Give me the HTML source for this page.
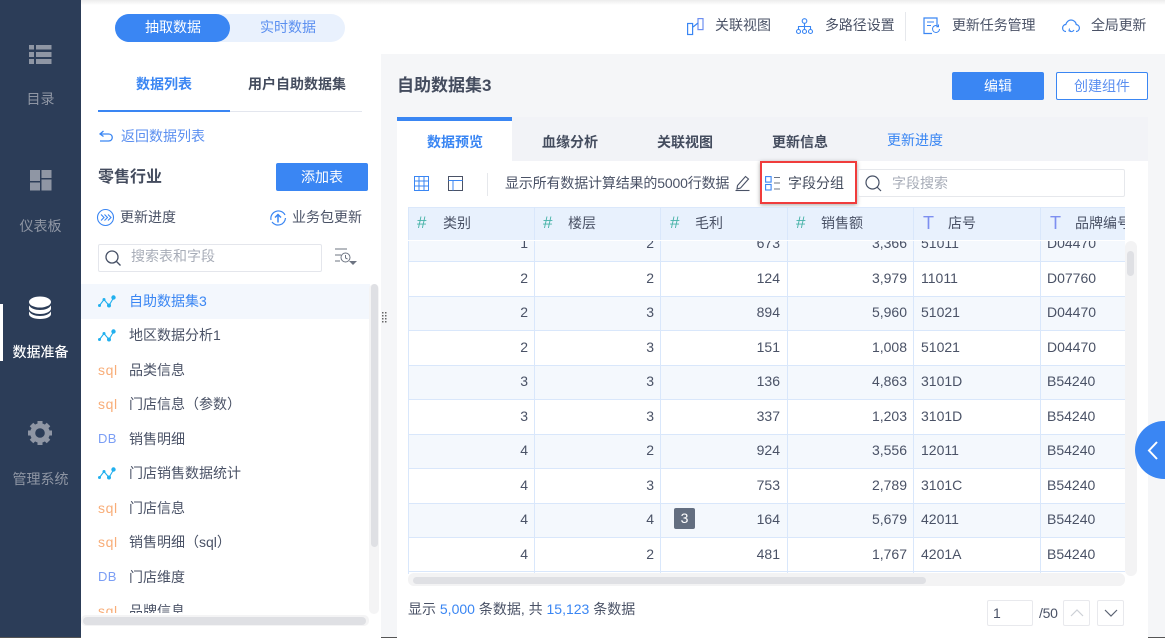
<!DOCTYPE html>
<html lang="zh"><head><meta charset="utf-8"><title>数据准备</title>
<style>
*{box-sizing:border-box}
html,body{margin:0;padding:0;width:1165px;height:638px;overflow:hidden;background:#fff}
body{position:relative;font-family:"Liberation Sans","Noto Sans CJK SC",sans-serif;font-size:14px;color:#4a5266}
.a,.t{position:absolute}
.t{white-space:nowrap;line-height:20px;height:20px;margin-top:1px}
.b{color:#3a86f3}
svg{position:absolute;overflow:visible}
.side{color:#8f96a4;width:81px;left:0;text-align:center}
.rowbg{position:absolute;left:408px;width:717px}
.v{position:absolute;width:1px;background:#d9e7fb}
.h{position:absolute;left:408px;width:717px;height:1px;background:#d9e7fb}
.n{position:absolute;text-align:right;line-height:20px;height:20px;color:#4a5266;width:120px!important;margin-top:0}
.l{position:absolute;line-height:20px;height:20px;color:#4a5266}
.hd{position:absolute;top:213px;line-height:20px;color:#4a5266}
.hash{position:absolute;top:213px;line-height:20px;color:#47b3a8;font-size:17px}
.tt{position:absolute;top:213px;line-height:20px;color:#7d8ff0;font-size:18px}
.it{left:129px;color:#4a5266}
.sq{left:98px;color:#f8ad78;font-size:14px;letter-spacing:.6px}
.db{left:98px;color:#7b9ef5;font-size:13px;letter-spacing:.3px}
</style></head><body>
<div class="a" style="left:81px;top:0;width:1084px;height:5px;background:linear-gradient(#ececec,#fff)"></div>
<div class="a" style="left:0;top:0;width:81px;height:638px;background:#2c3d58"></div>
<div class="a" style="left:0;top:304px;width:3px;height:57px;background:#fff"></div>
<div class="a" style="left:81px;top:54px;width:1084px;height:584px;background:#fff"></div>
<div class="a" style="left:381px;top:54px;width:784px;height:584px;background:#f5f6f8"></div>
<div class="a" style="left:0;top:637px;width:1165px;height:1px;background:#555"></div>

<!-- sidebar -->
<svg style="left:29px;top:45px" width="24" height="20"><g fill="#8f96a4"><rect width="5" height="4.500" x="0" y="0"/><rect width="15.500" height="4.500" x="7" y="0"/><rect width="5" height="5" x="0" y="7"/><rect width="15.500" height="5" x="7" y="7"/><rect width="5" height="5" x="0" y="14"/><rect width="15.500" height="5" x="7" y="14"/></g></svg>
<div class="t side" style="top:88px">目录</div>
<svg style="left:30px;top:170px" width="22" height="22"><g fill="#8f96a4"><rect width="10" height="20.500" x="0" y="0"/><rect width="10" height="8" x="11.500" y="0"/><rect width="10" height="11" x="11.500" y="9.500"/></g><rect x="0" y="11" width="10" height="1.500" fill="#2c3d58"/></svg>
<div class="t side" style="top:215px">仪表板</div>
<svg style="left:29px;top:296px" width="24" height="24"><ellipse cx="11" cy="6" rx="11" ry="5.500" fill="#fff"/><path d="M0 9.500c2 3 6 4.500 11 4.500s9-1.500 11-4.500v3c0 3-5 5.500-11 5.500S0 15.500 0 12.500z" fill="#fff"/><path d="M0 15.500c2 3 6 4.500 11 4.500s9-1.500 11-4.500v2.500c0 3-5 5-11 5S0 21 0 18z" fill="#fff"/></svg>
<div class="t side" style="top:341px;color:#fff;text-shadow:0 0 .4px #fff">数据准备</div>
<svg style="left:28px;top:421px" width="24" height="24" viewBox="0 0 24 24"><circle cx="12" cy="12" r="7.300" fill="none" stroke="#8f96a4" stroke-width="5"/><g stroke="#8f96a4" stroke-width="5"><path d="M12 0v4M12 20v4M0 12h4M20 12h4"/><path d="M3.500 3.500l2.800 2.800M17.700 17.700l2.800 2.800M3.500 20.500l2.800-2.800M17.700 6.300l2.800-2.800"/></g></svg>
<div class="t side" style="top:468px">管理系统</div>

<!-- top switch -->
<div class="a" style="left:115px;top:14px;width:230px;height:28px;border-radius:14px;background:#e9f1fd"></div>
<div class="a" style="left:115px;top:14px;width:115px;height:28px;border-radius:14px;background:#3a86f3"></div>
<div class="t" style="left:145px;top:16px;color:#fff">抽取数据</div>
<div class="t b" style="left:260px;top:16px;color:#5b8ff0">实时数据</div>

<!-- left tabs -->
<div class="t" style="left:136px;top:73px;color:#3a86f3;font-weight:700">数据列表</div>
<div class="t" style="left:248px;top:73px;color:#444c5e;font-weight:700">用户自助数据集</div>
<div class="a" style="left:98px;top:111px;width:264px;height:1px;background:#e3e6ee"></div>
<div class="a" style="left:98px;top:110px;width:132px;height:2px;background:#3a86f3"></div>
<svg style="left:99px;top:130px" width="16" height="14" fill="none" stroke="#3a86f3" stroke-width="1.300"><path d="M4.500 1L1 4l3.500 2.500M1 4h8.500c5 0 5 7 0 7H1"/></svg>
<div class="t b" style="left:121px;top:125px;color:#5b8ff0">返回数据列表</div>
<div class="t" style="left:98px;top:168px;font-size:16px;font-weight:700;color:#444c5e;margin-top:0">零售行业</div>
<div class="a" style="left:276px;top:163px;width:92px;height:28px;background:#3a86f3;border-radius:2px"></div>
<div class="t" style="left:276px;top:166px;width:92px;text-align:center;color:#fff">添加表</div>
<svg style="left:97px;top:209px" width="17" height="17" fill="none" stroke="#3a86f3" stroke-width="1.100"><circle cx="8.500" cy="8.500" r="8"/><path d="M4 5.500l3 3-3 3M7.500 5.500l3 3-3 3M11 5.500l3 3-3 3"/></svg>
<div class="t" style="left:120px;top:206px">更新进度</div>
<svg style="left:269px;top:209px" width="18" height="18" fill="none" stroke="#3a86f3" stroke-width="1.200"><path d="M2 11A7.500 7.500 0 0 1 16 6M16.500 9A7.500 7.500 0 0 1 3 13"/><path d="M9 13.500V6M6 8.500l3-3 3 3" stroke-width="1.500"/></svg>
<div class="t" style="left:292px;top:206px">业务包更新</div>
<div class="a" style="left:98px;top:244px;width:224px;height:28px;border:1px solid #e4e6ec;border-radius:2px;background:#fff"></div>
<svg style="left:105px;top:250px" width="16" height="16" fill="none" stroke="#465065" stroke-width="1.300"><circle cx="7" cy="7" r="6"/><path d="M11.500 11.500l4 4"/></svg>
<div class="t" style="left:131px;top:245px;color:#a8adb8">搜索表和字段</div>
<svg style="left:334px;top:248px" width="24" height="20" fill="none" stroke="#6d7482" stroke-width="1"><path d="M1 1h12M1 7h6M1 13h5"/><circle cx="11.500" cy="9.500" r="4.500"/><path d="M11.500 7v3l2 1"/><path d="M15 13h8l-4 4z" fill="#6d7482" stroke="none"/></svg>

<!-- list -->
<div class="a" style="left:81px;top:284px;width:289px;height:35px;background:#f3f7fd"></div>
<div class="t" style="left:129px;top:290px;color:#3a86f3">自助数据集3</div>
<svg style="left:98px;top:295px" width="18" height="14" fill="none" stroke="#22b0ee" stroke-width="1.100"><path d="M1.500 10.500L6 4.500l5 6 5-8.500"/><g fill="#22b0ee" stroke="none"><circle cx="1.500" cy="10.500" r="1.500"/><circle cx="6" cy="4.500" r="1.500"/><circle cx="11" cy="10.500" r="2"/><circle cx="15.500" cy="2.500" r="2.200"/></g></svg>
<svg style="left:98px;top:329px" width="18" height="14" fill="none" stroke="#22b0ee" stroke-width="1.100"><path d="M1.500 10.500L6 4.500l5 6 5-8.500"/><g fill="#22b0ee" stroke="none"><circle cx="1.500" cy="10.500" r="1.500"/><circle cx="6" cy="4.500" r="1.500"/><circle cx="11" cy="10.500" r="2"/><circle cx="15.500" cy="2.500" r="2.200"/></g></svg>
<svg style="left:98px;top:467px" width="18" height="14" fill="none" stroke="#22b0ee" stroke-width="1.100"><path d="M1.500 10.500L6 4.500l5 6 5-8.500"/><g fill="#22b0ee" stroke="none"><circle cx="1.500" cy="10.500" r="1.500"/><circle cx="6" cy="4.500" r="1.500"/><circle cx="11" cy="10.500" r="2"/><circle cx="15.500" cy="2.500" r="2.200"/></g></svg>
<div class="t sq" style="top:359px">sql</div>
<div class="t sq" style="top:393px">sql</div>
<div class="t sq" style="top:497px">sql</div>
<div class="t sq" style="top:531px">sql</div>
<div class="t sq" style="top:600px">sql</div>
<div class="t db" style="top:428px">DB</div>
<div class="t db" style="top:566px">DB</div>
<div class="t it" style="top:324px">地区数据分析1</div>
<div class="t it" style="top:359px">品类信息</div>
<div class="t it" style="top:393px">门店信息（参数）</div>
<div class="t it" style="top:428px">销售明细</div>
<div class="t it" style="top:462px">门店销售数据统计</div>
<div class="t it" style="top:497px">门店信息</div>
<div class="t it" style="top:531px">销售明细（sql）</div>
<div class="t it" style="top:566px">门店维度</div>
<div class="t it" style="top:600px">品牌信息</div>
<div class="a" style="left:81px;top:613px;width:300px;height:25px;background:#fff"></div>
<div class="a" style="left:369px;top:284px;width:10px;height:330px;background:#f4f4f5;border-radius:5px"></div>
<div class="a" style="left:371px;top:284px;width:7px;height:263px;background:#dfe0e4;border-radius:4px"></div>
<div class="a" style="left:81px;top:615px;width:288px;height:11px;background:#f4f4f5;border-radius:5px"></div>
<div class="a" style="left:83px;top:617px;width:283px;height:8px;background:#dfe0e4;border-radius:4px"></div>
<svg style="left:382px;top:312px" width="6" height="14" fill="#666"><rect x="0" y="0" width="1.500" height="1.500"/><rect x="3" y="0" width="1.500" height="1.500"/><rect x="0" y="3" width="1.500" height="1.500"/><rect x="3" y="3" width="1.500" height="1.500"/><rect x="0" y="6" width="1.500" height="1.500"/><rect x="3" y="6" width="1.500" height="1.500"/><rect x="0" y="9" width="1.500" height="1.500"/><rect x="3" y="9" width="1.500" height="1.500"/></svg>

<!-- top right -->
<svg style="left:687px;top:18px" width="17" height="17" fill="none" stroke="#3a86f3" stroke-width="1.200"><rect x=".6" y="5.500" width="5" height="11"/><rect x="11" y=".6" width="5" height="11" stroke="#6d8ff0"/><path d="M6 9l5-4"/></svg>
<div class="t" style="left:715px;top:14px">关联视图</div>
<svg style="left:796px;top:18px" width="17" height="17" fill="none" stroke="#3a86f3" stroke-width="1.100"><circle cx="8.500" cy="3" r="2.300"/><circle cx="2.500" cy="13.500" r="2"/><circle cx="8.500" cy="13.500" r="2"/><circle cx="14.500" cy="13.500" r="2"/><path d="M8.500 5.500v6M2.500 11.500V8.500h12v3"/></svg>
<div class="t" style="left:825px;top:14px;letter-spacing:-.1px">多路径设置</div>
<div class="a" style="left:905px;top:12px;width:1px;height:29px;background:#e6e8ec"></div>
<svg style="left:923px;top:17px" width="18" height="18" fill="none" stroke="#3a86f3" stroke-width="1.200"><path d="M9 16.500H1V1h13v7"/><path d="M4 5h7M4 8.500h4" stroke-width="1"/><path d="M16.500 12a3.500 3.500 0 1 1-1-2.500M15.500 7.500v2.200h-2.200" stroke-width="1"/></svg>
<div class="t" style="left:952px;top:14px;letter-spacing:-.1px">更新任务管理</div>
<svg style="left:1062px;top:19px" width="18" height="15" fill="none" stroke="#3a86f3" stroke-width="1.200"><path d="M4 12.500C1.800 12.500.6 11 .6 9s1.500-3.500 3.200-3.500C4.500 3 6.500 1 9 1s5 2 5.200 4.500c2 .3 3.200 1.800 3.200 3.500 0 2-1.500 3.500-3.400 3.500"/><path d="M7 11.500a3 3 0 0 0 5-.5M7.500 9.500L7 11.800l2 .2" stroke-width="1"/></svg>
<div class="t" style="left:1091px;top:14px;letter-spacing:-.2px">全局更新</div>

<!-- title -->
<div class="t" style="left:397px;top:75px;font-size:17px;font-weight:700;color:#444c5e;margin-top:1px">自助数据集3</div>
<div class="a" style="left:952px;top:72px;width:92px;height:28px;background:#3a86f3;border-radius:2px"></div>
<div class="t" style="left:952px;top:75px;width:92px;text-align:center;color:#fff">编辑</div>
<div class="a" style="left:1056px;top:72px;width:92px;height:28px;border:1px solid #3a86f3;border-radius:2px;background:#fff"></div>
<div class="t" style="left:1056px;top:75px;width:92px;text-align:center;color:#5b8ff0">创建组件</div>

<!-- tabs -->
<div class="a" style="left:397px;top:117px;width:751px;height:44px;background:#f2f3f7"></div>
<div class="a" style="left:397px;top:161px;width:751px;height:477px;background:#fff"></div>
<div class="a" style="left:397px;top:117px;width:115px;height:44px;background:#fff;border-top:4px solid #3a86f3"></div>
<div class="t" style="left:427px;top:131px;color:#3a86f3;font-weight:700">数据预览</div>
<div class="t" style="left:542px;top:131px;font-weight:700;color:#444c5e">血缘分析</div>
<div class="t" style="left:657px;top:131px;font-weight:700;color:#444c5e">关联视图</div>
<div class="t" style="left:772px;top:131px;font-weight:700;color:#444c5e">更新信息</div>
<div class="t" style="left:887px;top:129px;color:#3a86f3">更新进度</div>

<!-- toolbar -->
<svg style="left:414px;top:176px" width="16" height="15" fill="none" stroke="#3a86f3" stroke-width="1"><rect x=".5" y=".5" width="14" height="14"/><path d="M5 .5v14M10 .5v14M.5 5h14M.5 10h14"/></svg>
<svg style="left:448px;top:176px" width="16" height="15" fill="none" stroke="#4a5266" stroke-width="1"><rect x=".5" y=".5" width="14" height="14"/><path d="M.5 4.500h14M5 4.500v10" stroke="#3a86f3"/></svg>
<div class="a" style="left:487px;top:173px;width:1px;height:23px;background:#e6e8ec"></div>
<div class="t" style="left:505px;top:172px;letter-spacing:-.16px">显示所有数据计算结果的5000行数据</div>
<svg style="left:735px;top:175px" width="15" height="16" fill="none" stroke="#4a5266" stroke-width="1.100"><path d="M2.500 10.500L10.500 1.500l3 2.500-8 9-3.500 1z"/><path d="M.5 15.500h14"/></svg>
<div class="a" style="left:760px;top:161px;width:97px;height:43px;border:2px solid #f03c3c;box-shadow:0 1px 4px rgba(0,0,0,.35);background:#fff"></div>
<svg style="left:765px;top:176px" width="16" height="15" fill="none" stroke="#3a86f3" stroke-width="1.100"><rect x=".6" y=".6" width="5.500" height="5.500"/><rect x=".6" y="8.500" width="5.500" height="5.500"/><path d="M9 1.500h6M9 7h6M9 13h6" stroke="#6c7482"/></svg>
<div class="t" style="left:788px;top:172px;color:#444c5e">字段分组</div>
<div class="a" style="left:858px;top:169px;width:267px;height:28px;border:1px solid #e6e8ec;border-radius:2px;background:#fff"></div>
<svg style="left:865px;top:175px" width="17" height="17" fill="none" stroke="#465065" stroke-width="1.200"><circle cx="7.500" cy="7.500" r="6.500"/><path d="M12 12l4 4"/></svg>
<div class="t" style="left:892px;top:172px;color:#a8adb8">字段搜索</div>

<!-- table -->
<div class="a" style="left:408px;top:207px;width:717px;height:33px;background:#e8f1fd;border-top:1px solid #dbe8fb"></div>
<div class="rowbg" style="top:240px;height:21px;background:#f4f8fd"></div>
<div class="rowbg" style="top:296px;height:34px;background:#f4f8fd"></div>
<div class="rowbg" style="top:365px;height:34px;background:#f4f8fd"></div>
<div class="rowbg" style="top:434px;height:34px;background:#f4f8fd"></div>
<div class="rowbg" style="top:503px;height:34px;background:#f4f8fd"></div>
<div class="h" style="top:261px"></div><div class="h" style="top:296px"></div><div class="h" style="top:330px"></div><div class="h" style="top:365px"></div><div class="h" style="top:399px"></div><div class="h" style="top:434px"></div><div class="h" style="top:468px"></div><div class="h" style="top:503px"></div><div class="h" style="top:537px"></div><div class="h" style="top:571px"></div>
<div class="v" style="left:408px;top:207px;height:367px"></div><div class="v" style="left:534px;top:207px;height:367px"></div><div class="v" style="left:660px;top:207px;height:367px"></div><div class="v" style="left:787px;top:207px;height:367px"></div><div class="v" style="left:913px;top:207px;height:367px"></div><div class="v" style="left:1040px;top:207px;height:367px"></div>
<div class="a" style="left:408px;top:240px;width:717px;height:1px;background:#fff"></div>

<div class="hash" style="left:417px">#</div><div class="hd" style="left:443px">类别</div>
<div class="hash" style="left:543px">#</div><div class="hd" style="left:568px">楼层</div>
<div class="hash" style="left:670px">#</div><div class="hd" style="left:695px">毛利</div>
<div class="hash" style="left:796px">#</div><div class="hd" style="left:821px">销售额</div>
<div class="tt" style="left:923px">T</div><div class="hd" style="left:948px">店号</div>
<div class="tt" style="left:1050px">T</div>
<div class="a" style="left:1075px;top:213px;width:50px;height:20px;overflow:hidden;line-height:20px;white-space:nowrap">品牌编号</div>

<div class="a" style="left:408px;top:241px;width:717px;height:20px;overflow:hidden">
<div class="n" style="left:0;top:-8px">1</div><div class="n" style="left:126px;top:-8px">2</div><div class="n" style="left:252px;top:-8px">673</div><div class="n" style="left:379px;top:-8px">3,366</div><div class="l" style="left:513px;top:-8px">51011</div><div class="l" style="left:639px;top:-8px">D04470</div>
</div>
<div class="n" style="left:408px;top:268px">2</div><div class="n" style="left:534px;top:268px">2</div><div class="n" style="left:660px;top:268px">124</div><div class="n" style="left:787px;top:268px">3,979</div><div class="l" style="left:921px;top:268px">11011</div><div class="l" style="left:1047px;top:268px">D07760</div>
<div class="n" style="left:408px;top:302px">2</div><div class="n" style="left:534px;top:302px">3</div><div class="n" style="left:660px;top:302px">894</div><div class="n" style="left:787px;top:302px">5,960</div><div class="l" style="left:921px;top:302px">51021</div><div class="l" style="left:1047px;top:302px">D04470</div>
<div class="n" style="left:408px;top:337px">2</div><div class="n" style="left:534px;top:337px">3</div><div class="n" style="left:660px;top:337px">151</div><div class="n" style="left:787px;top:337px">1,008</div><div class="l" style="left:921px;top:337px">51021</div><div class="l" style="left:1047px;top:337px">D04470</div>
<div class="n" style="left:408px;top:371px">3</div><div class="n" style="left:534px;top:371px">3</div><div class="n" style="left:660px;top:371px">136</div><div class="n" style="left:787px;top:371px">4,863</div><div class="l" style="left:921px;top:371px">3101D</div><div class="l" style="left:1047px;top:371px">B54240</div>
<div class="n" style="left:408px;top:406px">3</div><div class="n" style="left:534px;top:406px">3</div><div class="n" style="left:660px;top:406px">337</div><div class="n" style="left:787px;top:406px">1,203</div><div class="l" style="left:921px;top:406px">3101D</div><div class="l" style="left:1047px;top:406px">B54240</div>
<div class="n" style="left:408px;top:440px">4</div><div class="n" style="left:534px;top:440px">2</div><div class="n" style="left:660px;top:440px">924</div><div class="n" style="left:787px;top:440px">3,556</div><div class="l" style="left:921px;top:440px">12011</div><div class="l" style="left:1047px;top:440px">B54240</div>
<div class="n" style="left:408px;top:475px">4</div><div class="n" style="left:534px;top:475px">3</div><div class="n" style="left:660px;top:475px">753</div><div class="n" style="left:787px;top:475px">2,789</div><div class="l" style="left:921px;top:475px">3101C</div><div class="l" style="left:1047px;top:475px">B54240</div>
<div class="n" style="left:408px;top:509px">4</div><div class="n" style="left:534px;top:509px">4</div><div class="n" style="left:660px;top:509px">164</div><div class="n" style="left:787px;top:509px">5,679</div><div class="l" style="left:921px;top:509px">42011</div><div class="l" style="left:1047px;top:509px">B54240</div>
<div class="n" style="left:408px;top:544px">4</div><div class="n" style="left:534px;top:544px">2</div><div class="n" style="left:660px;top:544px">481</div><div class="n" style="left:787px;top:544px">1,767</div><div class="l" style="left:921px;top:544px">4201A</div><div class="l" style="left:1047px;top:544px">B54240</div>
<div class="a" style="left:674px;top:508px;width:21px;height:21px;background:#636e80;border-radius:2px;color:#fff;text-align:center;line-height:21px">3</div>

<div class="a" style="left:1125px;top:241px;width:12px;height:335px;background:#f3f3f4;border-radius:6px"></div>
<div class="a" style="left:1127px;top:251px;width:7px;height:25px;background:#dfe0e4;border-radius:4px"></div>
<div class="a" style="left:408px;top:573px;width:717px;height:13px;background:#f3f3f4;border-radius:6px"></div>
<div class="a" style="left:413px;top:577px;width:513px;height:7px;background:#dfe0e4;border-radius:4px"></div>

<div class="t" style="left:408px;top:598px">显示 <span style="color:#3a86f3">5,000</span> 条数据, 共 <span style="color:#3a86f3">15,123</span> 条数据</div>
<div class="a" style="left:987px;top:600px;width:46px;height:26px;border:1px solid #e8e9ed;border-radius:2px;background:#fff"></div>
<div class="t" style="left:993px;top:602px;font-size:14px">1</div>
<div class="t" style="left:1039px;top:602px;letter-spacing:-.3px">/50</div>
<div class="a" style="left:1063px;top:600px;width:27px;height:26px;border:1px solid #e8e9ed;border-radius:2px;background:#fff"></div>
<svg style="left:1070px;top:609px" width="14" height="8" fill="none" stroke="#ccd0d6" stroke-width="1.200"><path d="M1 7l6-6 6 6"/></svg>
<div class="a" style="left:1097px;top:600px;width:27px;height:26px;border:1px solid #e8e9ed;border-radius:2px;background:#fff"></div>
<svg style="left:1104px;top:609px" width="14" height="8" fill="none" stroke="#5a6272" stroke-width="1.200"><path d="M1 1l6 6 6-6"/></svg>

<div class="a" style="left:1135px;top:421px;width:58px;height:58px;border-radius:50%;background:#3a86f3"></div>
<svg style="left:1147px;top:441px" width="12" height="20" fill="none" stroke="#fff" stroke-width="2"><path d="M10 1L2 9.500l8 8.500"/></svg>
</body></html>
